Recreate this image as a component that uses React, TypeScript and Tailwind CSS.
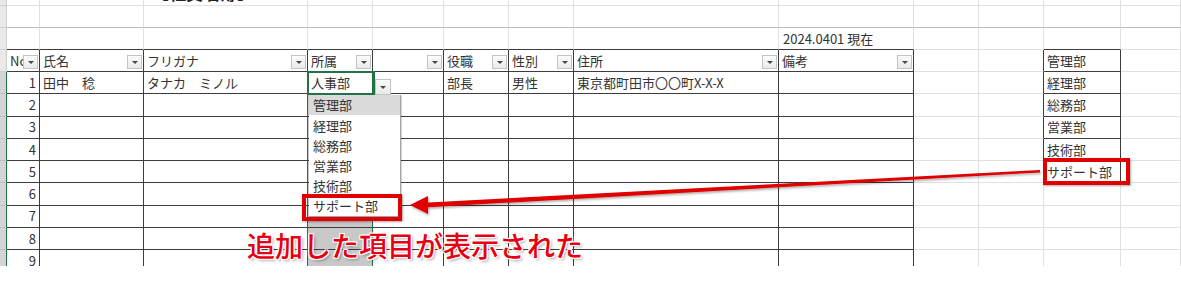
import React from 'react';

const JP = "font-['Noto_Sans_CJK_JP','Noto_Sans',sans-serif]";

// column 1..9 = table, 12 = department list
const header = ['', 'No', '氏名', 'フリガナ', '所属', '', '役職', '性別', '住所', '備考', '', '', '管理部', ''];
const firstRow = ['', '1', '田中　稔', 'タナカ　ミノル', '人事部', '', '部長', '男性', '東京都町田市〇〇町X-X-X', '', '', '', '経理部', ''];
const deptList: Record<number, string> = { 5: '総務部', 6: '営業部', 7: '技術部', 8: 'サポート部' };
const options = ['管理部', '経理部', '総務部', '営業部', '技術部', 'サポート部'];

function FilterButton({ className = '' }: { className?: string }) {
  return (
    <div className={`w-[15px] h-[14px] shrink-0 border border-[#c3c3c3] bg-gradient-to-b from-[#fbfbfb] to-[#e9e9e9] flex items-center justify-center ${className}`}>
      <div className="w-0 h-0 border-x-[3px] border-x-transparent border-t-[3px] border-t-[#474747]" />
    </div>
  );
}

function Cell({ r, c }: { r: number; c: number }) {
  const inTable = c >= 1 && c <= 9;
  const inList = c === 12;

  // bottom edge
  let bottom = 'border-b-[#e0e0e0]';
  if ((inTable && r >= 2) || (inList && r >= 2 && r <= 8)) bottom = 'border-b-[#3c3c3c]';
  else if (r === 1) bottom = 'border-b-[#bdbdbd]';
  if (c === 4 && r === 3) bottom = 'border-b-[#217346]';
  if (c === 0) bottom = r >= 4 ? 'border-b-[#bfbfbf]' : 'border-b-[#cfcfcf]';

  // right edge
  let right = 'border-r-[#e0e0e0]';
  if ((inTable && r >= 3) || ((c === 11 || c === 12) && r >= 3 && r <= 8)) right = 'border-r-[#3c3c3c]';
  if ((c === 3 || c === 4) && r >= 4) right = 'border-r-[#217346]';
  if (c === 0) right = r >= 4 ? 'border-r-[#217346]' : 'border-r-[#cfcfcf]';

  let bg = 'bg-white';
  if (c === 0) bg = r >= 4 ? 'bg-[#d4d4d4]' : 'bg-[#e9e9e9]';
  if (c === 4 && r >= 5) bg = 'bg-[#c8c8c8]';

  let content: React.ReactNode = null;
  if (r === 0 && c === 3) {
    content = <span className="block pl-[8px] -mt-[20px] text-[17px] font-bold text-[#222] whitespace-nowrap">【社員名簿】</span>;
  } else if (r === 2 && c === 9) {
    content = <span className="pl-[4px] whitespace-nowrap">2024.0401 現在</span>;
  } else if (r === 3 && inTable) {
    content = (
      <div className="flex items-end w-full h-full">
        <span className="flex-1 min-w-0 overflow-hidden whitespace-nowrap pl-[3px] self-center">{header[c]}</span>
        <FilterButton className="mb-[2px] mr-[1px]" />
      </div>
    );
  } else if (r === 3 && inList) {
    content = <span className="pl-[3px]">{header[c]}</span>;
  } else if (r === 4) {
    content = c === 1
      ? <span className="w-full text-right pr-[3px]">1</span>
      : <span className="pl-[3px] whitespace-nowrap">{firstRow[c]}</span>;
  } else if (r >= 5 && c === 1) {
    content = <span className="w-full text-right pr-[3px]">{r - 3}</span>;
  } else if (inList && deptList[r]) {
    content = <span className="pl-[3px] whitespace-nowrap">{deptList[r]}</span>;
  }

  return (
    <div className={`border-r border-b ${right} ${bottom} ${bg} flex items-center overflow-hidden text-[13px] text-[#333]`}>
      {content}
    </div>
  );
}

export default function App() {
  const rows = Array.from({ length: 13 }, (_, i) => i);
  const cols = Array.from({ length: 14 }, (_, i) => i);

  return (
    <div className={`w-[1181px] h-[283px] bg-white relative overflow-hidden ${JP}`}>
      <div className="h-[266px] overflow-hidden">
        <div className="grid grid-cols-[7px_33px_104px_164px_65px_71px_65px_65px_205px_135px_65px_65px_77px_60px] grid-rows-[6px_22px_22px_22px_repeat(9,22.25px)]">
          {rows.map((r) => cols.map((c) => <Cell key={`${r}-${c}`} r={r} c={c} />))}
        </div>
      </div>

      {/* active cell */}
      <div className="absolute left-[307px] top-[71px] w-[68px] h-[24px] border-2 border-[#217346]" />
      {/* in-cell dropdown button */}
      <FilterButton className="absolute left-[375px] top-[79px] w-[16px] h-[16px]" />

      {/* validation list */}
      <div className="absolute left-[309px] top-[95px] w-[92px] h-[122px] bg-white border-r border-b border-[#a3a3a3] shadow-[1px_1px_1px_rgba(0,0,0,0.15)] text-[13px] text-[#333]">
        {options.map((o, i) => (
          <div key={o} className={`h-[20.2px] flex items-center pl-[4px] whitespace-nowrap ${i === 0 ? 'bg-[#dadada]' : ''}`}>
            {o}
          </div>
        ))}
      </div>

      {/* red frames */}
      <div className="absolute left-[302px] top-[194px] w-[100px] h-[27px] border-4 border-[#e00000] shadow-[1px_1px_2px_rgba(0,0,0,0.35)]" />
      <div className="absolute left-[1043px] top-[158px] w-[87px] h-[27px] border-4 border-[#e00000] shadow-[1px_1px_2px_rgba(0,0,0,0.35)]" />

      {/* arrow */}
      <svg className="absolute left-0 top-0 pointer-events-none" width="1181" height="283">
        <defs>
          <filter id="sh" x="-5%" y="-50%" width="110%" height="200%">
            <feDropShadow dx="1" dy="1.5" stdDeviation="0.8" floodColor="#000" floodOpacity="0.35" />
          </filter>
        </defs>
        <g filter="url(#sh)" fill="#e00000">
          <polygon points="424,202.8 1040,170 1040,172.4 424,207.4" />
          <polygon points="410,205 428,196 428,214" />
        </g>
      </svg>

      {/* caption */}
      <div className="absolute left-[247px] top-[231px] text-[28px] leading-none font-medium text-[#e60012] whitespace-nowrap [text-shadow:0_0_2px_#fff,0_0_2px_#fff,1px_1px_0_#fff,-1px_-1px_0_#fff,1px_-1px_0_#fff,-1px_1px_0_#fff,2px_2px_3px_rgba(0,0,0,0.35)]">
        追加した項目が表示された
      </div>
    </div>
  );
}
